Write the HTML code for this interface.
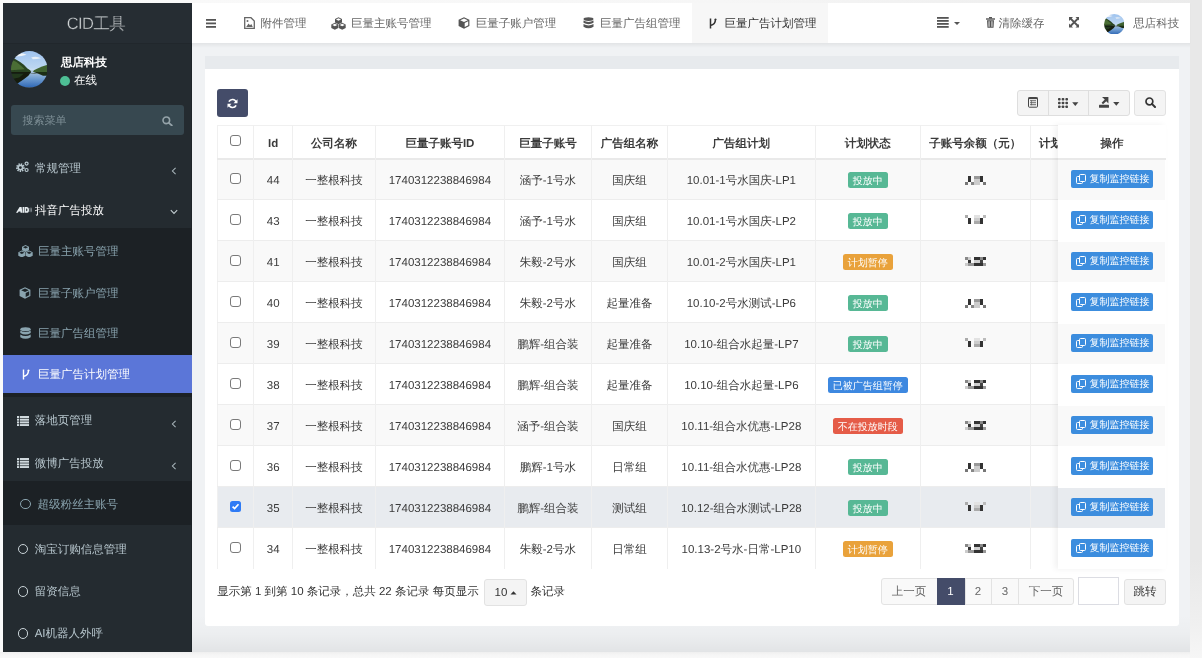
<!DOCTYPE html><html><head><meta charset="utf-8"><style>
*{box-sizing:border-box;margin:0;padding:0}
html,body{width:1202px;height:658px;overflow:hidden;background:linear-gradient(90deg,#fafafa,#f6f6f6 60%,#ebebeb);font-family:"Liberation Sans",sans-serif;font-size:11.5px;color:#333;text-rendering:geometricPrecision}
.a{position:absolute}
.t{position:absolute;white-space:nowrap;line-height:1}
#shadow{left:1190px;top:0;width:12px;height:658px;background:linear-gradient(180deg,#e8e8e8 85%,#f0f0f0 95%,#f6f6f6)}
#shadowb{left:0;top:652px;width:1190px;height:6px;background:linear-gradient(180deg,#efefef,#f6f6f6 50%,#f8f8f8)}
#side{left:3px;top:3px;width:189px;height:649px;background:#242b30;overflow:hidden;box-shadow:inset -1px 0 0 #1e2428}
#header{left:192px;top:3px;width:998px;height:40px;background:#fff;box-shadow:0 1px 1px rgba(0,0,0,.05)}
#content{left:192px;top:43px;width:998px;height:609px;background:#f0f2f4}
#card{left:204.5px;top:55.5px;width:974.5px;height:570.5px;background:#fff;border-radius:3px}
.side-t{color:#b8c7ce}
.sub-t{color:#8aa4af}
.hd-t{color:#555}
.cell{position:absolute;text-align:center;white-space:nowrap;line-height:1;color:#3b3b3b}
.bdg{position:absolute;color:#fff;font-size:10px;line-height:16px;height:16px;padding-top:2px;border-radius:2.5px;text-align:center;white-space:nowrap}
.cbx{position:absolute;width:11px;height:11px;border:1.1px solid #7a7a7a;border-radius:3px;background:#fff}
.vl{position:absolute;width:1px;background:#efefef}
.hl{position:absolute;height:1px;background:#ededed}
.btn{position:absolute;background:#f4f4f4;border:1px solid #e2e2e2;border-radius:3px}
</style></head><body><div id="root" style="position:absolute;left:0;top:0;width:1202px;height:658px;will-change:transform">
<div id="shadow" class="a"></div><div id="shadowb" class="a"></div>
<div id="side" class="a">
<div class="a" style="left:0;top:0;width:189px;height:40px;background:#262d33"></div>
<div class="t" style="left:-1.5px;width:189px;text-align:center;top:12.5px;font-size:16.5px;color:#d0d4d6;letter-spacing:-0.6px;-webkit-text-stroke:0.35px #262d33">CID工具</div>
<div class="a" style="left:0;top:40px;width:189px;height:1px;background:#21272c"></div>
<svg class="a" style="left:7.800000000000001px;top:48.2px" width="36.6" height="36.6" viewBox="0 0 40 40">
<defs><clipPath id="cs"><circle cx="20" cy="20" r="20"/></clipPath>
<filter id="fs" x="-10%" y="-10%" width="120%" height="120%"><feGaussianBlur stdDeviation="0.5"/></filter>
<linearGradient id="ss" x1="0" y1="0" x2="0" y2="1"><stop offset="0" stop-color="#9fc3ee"/><stop offset="0.45" stop-color="#bcd6f2"/><stop offset="0.6" stop-color="#dce9f5"/></linearGradient>
<linearGradient id="ws" x1="0" y1="0" x2="0" y2="1"><stop offset="0" stop-color="#b4cbe0"/><stop offset="0.5" stop-color="#6d9bd0"/><stop offset="1" stop-color="#2f67b5"/></linearGradient></defs>
<g clip-path="url(#cs)"><g filter="url(#fs)">
<rect width="40" height="40" fill="url(#ss)"/>
<path d="M4 4 Q10 1 17 4 Q12 6 6 6Z" fill="#eef3f8"/>
<path d="M22 7 Q28 5 33 8 Q28 9 24 9Z" fill="#e6eef6"/>
<rect y="21" width="40" height="19" fill="url(#ws)"/>
<path d="M0 6 L5 9 L10 12 L14 15 L18 19 L21 21 L22 23 L0 24Z" fill="#2b4420"/>
<path d="M0 9 L6 12 L11 16 L15 20 L0 21Z" fill="#4b6e34"/>
<path d="M40 15 L34 17 L29 19 L25 21 L24 23 L40 24Z" fill="#3f6230"/>
<path d="M0 23 L22 23 L19 27 L14 31 L8 35 L3 38 L0 40Z" fill="#141d10"/>
<path d="M0 25 L14 25 L9 29 L0 31Z" fill="#23381b"/>
<path d="M40 23 L25 23 L30 25 L35 27 L40 27Z" fill="#1f2d19"/>
<path d="M18 24 L30 24 L26 25 Z" fill="#4a5a50"/>
</g></g></svg>
<div class="t" style="left:58px;top:54.5px;color:#fff;font-weight:bold">思店科技</div>
<div class="a" style="left:57px;top:72.7px;width:10px;height:10px;border-radius:50%;background:#4ebf95"></div>
<div class="t" style="left:71px;top:73.3px;color:#fff">在线</div>
<div class="a" style="left:7.6px;top:102.3px;width:173.4px;height:30px;background:#374850;border-radius:3px"></div>
<div class="t" style="left:19.5px;top:113.3px;color:#7f9097;font-size:11px">搜索菜单</div>
<svg class="a" style="left:159px;top:113px" width="11" height="10" viewBox="0 0 11 10"><circle cx="4.3" cy="4.3" r="3.3" fill="none" stroke="#95a3a9" stroke-width="1.6"/><path d="M6.8 6.8 L9.8 9.5" stroke="#95a3a9" stroke-width="1.8" stroke-linecap="round"/></svg>
<svg class="a" style="left:13.3px;top:157.5px" width="14" height="12" viewBox="0 0 14 12"><g fill="none" stroke="#b8c7ce"><circle cx="4.4" cy="6.6" r="3.3" stroke-width="2.2" stroke-dasharray="1.3 0.92"/><circle cx="4.4" cy="6.6" r="2.2" stroke-width="1.6"/><circle cx="10.6" cy="2.6" r="1.5" stroke-width="1.2"/><circle cx="10.6" cy="9" r="1.5" stroke-width="1.2"/></g></svg>
<div class="t side-t" style="left:32px;top:160.7px">常规管理</div>
<svg class="a" style="left:168px;top:164px" width="6" height="8" viewBox="0 0 6 8"><path d="M4.6 0.8 L1.4 4 L4.6 7.2" fill="none" stroke="#a9b6bb" stroke-width="1.05"/></svg>
<svg class="a" style="left:12.6px;top:203.5px" width="16" height="6" viewBox="0 0 16 6"><g fill="#e6ecef"><path d="M0 5.8 L3.6 0 L5.6 0 L6.4 5.8 L4.6 5.8 L4.4 4.6 L2.6 4.6 L1.9 5.8Z"/><rect x="6.6" y="0" width="1.6" height="5.8"/><path d="M8.6 0 H10.6 Q13 0 13 2.9 Q13 5.8 10.6 5.8 H8.6Z"/></g><path d="M10.2 1.5 Q11.4 1.5 11.4 2.9 Q11.4 4.3 10.2 4.3Z" fill="#242b30"/><g fill="none" stroke="#aab5ba" stroke-width="0.7"><path d="M13.8 1.2 Q14.6 2.9 13.8 4.6"/><path d="M15 0.6 Q16 2.9 15 5.2"/></g></svg>
<div class="t side-t" style="left:32px;top:202.7px;color:#fff">抖音广告投放</div>
<svg class="a" style="left:167px;top:206.3px" width="8" height="6" viewBox="0 0 8 6"><path d="M0.8 1.2 L4 4.4 L7.2 1.2" fill="none" stroke="#c5d0d4" stroke-width="1.05"/></svg>
<div class="a" style="left:0;top:224.8px;width:189px;height:169.0px;background:#1c2125"></div>
<svg class="a" style="left:15px;top:242px" width="15" height="12" viewBox="0 0 15 12"><g fill="#8aa4af"><path d="M7.5 0 L11 1.8 L11 5.2 L7.5 7 L4 5.2 L4 1.8Z"/><path d="M3.8 5.5 L7.3 7.3 L7.3 10.7 L3.8 12.5 L0.3 10.7 L0.3 7.3Z"/><path d="M11.2 5.5 L14.7 7.3 L14.7 10.7 L11.2 12.5 L7.7 10.7 L7.7 7.3Z"/></g><g fill="#1b2226"><path d="M5 2.2 L7.5 3.4 L10 2.2 L7.5 1Z"/><path d="M1.3 7.7 L3.8 8.9 L6.3 7.7 L3.8 6.5Z"/><path d="M8.7 7.7 L11.2 8.9 L13.7 7.7 L11.2 6.5Z"/></g></svg>
<div class="t sub-t" style="left:35px;top:243.7px">巨量主账号管理</div>
<svg class="a" style="left:16px;top:284px" width="12" height="12" viewBox="0 0 12 12"><path d="M6 0.3 L11.4 2.8 L11.4 8.9 L6 11.7 L0.6 8.9 L0.6 2.8Z" fill="#8aa4af"/><path d="M2.2 3.2 L6 5 L9.8 3.2 L6 1.6Z" fill="#1b2226"/><path d="M6.7 6 L10.2 4.3 L10.2 8.3 L6.7 10Z" fill="#1b2226"/></svg>
<div class="t sub-t" style="left:35px;top:285.5px">巨量子账户管理</div>
<svg class="a" style="left:17px;top:323.5px" width="11" height="13" viewBox="0 0 11 13"><g fill="#8aa4af"><ellipse cx="5.5" cy="2.2" rx="5.2" ry="2"/><path d="M0.3 3.6 Q5.5 6.6 10.7 3.6 L10.7 6 Q5.5 9 0.3 6Z"/><path d="M0.3 7.4 Q5.5 10.4 10.7 7.4 L10.7 10.2 Q5.5 13.4 0.3 10.2Z"/></g></svg>
<div class="t sub-t" style="left:35px;top:325.7px">巨量广告组管理</div>
<div class="a" style="left:0;top:352.2px;width:189px;height:38.2px;background:#5b76d8"></div>
<svg class="a" style="left:19px;top:365.5px" width="8" height="11" viewBox="0 0 8 11"><path d="M1.5 0.5 L1.5 10.5 M1.5 7.5 Q6.5 6.5 6.5 1" fill="none" stroke="#fff" stroke-width="1.4"/><circle cx="6.5" cy="1.5" r="1" fill="#fff"/></svg>
<div class="t side-t" style="left:35px;top:367.0px;color:#fff">巨量广告计划管理</div>
<svg class="a" style="left:14px;top:412.5px" width="12" height="10" viewBox="0 0 12 10"><g fill="#d0d9dd"><rect x="0" y="0" width="2.2" height="2"/><rect x="3" y="0" width="9" height="2"/><rect x="0" y="2.7" width="2.2" height="2"/><rect x="3" y="2.7" width="9" height="2"/><rect x="0" y="5.4" width="2.2" height="2"/><rect x="3" y="5.4" width="9" height="2"/><rect x="0" y="8.1" width="2.2" height="1.9"/><rect x="3" y="8.1" width="9" height="1.9"/></g></svg>
<div class="t side-t" style="left:31.700000000000003px;top:413.2px">落地页管理</div>
<svg class="a" style="left:168px;top:416.5px" width="6" height="8" viewBox="0 0 6 8"><path d="M4.6 0.8 L1.4 4 L4.6 7.2" fill="none" stroke="#a9b6bb" stroke-width="1.05"/></svg>
<svg class="a" style="left:14px;top:454.8px" width="12" height="10" viewBox="0 0 12 10"><g fill="#d0d9dd"><rect x="0" y="0" width="2.2" height="2"/><rect x="3" y="0" width="9" height="2"/><rect x="0" y="2.7" width="2.2" height="2"/><rect x="3" y="2.7" width="9" height="2"/><rect x="0" y="5.4" width="2.2" height="2"/><rect x="3" y="5.4" width="9" height="2"/><rect x="0" y="8.1" width="2.2" height="1.9"/><rect x="3" y="8.1" width="9" height="1.9"/></g></svg>
<div class="t side-t" style="left:31.700000000000003px;top:455.5px">微博广告投放</div>
<svg class="a" style="left:168px;top:459px" width="6" height="8" viewBox="0 0 6 8"><path d="M4.6 0.8 L1.4 4 L4.6 7.2" fill="none" stroke="#a9b6bb" stroke-width="1.05"/></svg>
<div class="a" style="left:0;top:478px;width:189px;height:44px;background:#1c2125"></div>
<div class="a" style="left:17.4px;top:495.6px;width:10.5px;height:10.5px;border-radius:50%;border:1.6px solid #8aa4af"></div>
<div class="t sub-t" style="left:34.4px;top:496.5px">超级粉丝主账号</div>
<div class="a" style="left:14.7px;top:540.8px;width:10.5px;height:10.5px;border-radius:50%;border:1.6px solid #c9d3d7"></div>
<div class="t side-t" style="left:31.700000000000003px;top:541.7px">淘宝订购信息管理</div>
<div class="a" style="left:14.7px;top:583.0999999999999px;width:10.5px;height:10.5px;border-radius:50%;border:1.6px solid #c9d3d7"></div>
<div class="t side-t" style="left:31.700000000000003px;top:584.0px">留资信息</div>
<div class="a" style="left:14.7px;top:625.0px;width:10.5px;height:10.5px;border-radius:50%;border:1.6px solid #c9d3d7"></div>
<div class="t side-t" style="left:31.700000000000003px;top:625.9000000000001px">AI机器人外呼</div>
</div>
<div id="header" class="a"></div>
<div class="a" style="left:692.4px;top:3px;width:136px;height:40px;background:#f7f7f7"></div>
<svg class="a" style="left:206px;top:18.5px" width="10" height="9" viewBox="0 0 10 9"><g fill="#555"><rect y="0" width="10" height="1.8"/><rect y="3.5" width="10" height="1.8"/><rect y="7" width="10" height="1.8"/></g></svg>
<svg class="a" style="left:244px;top:17px" width="11" height="12" viewBox="0 0 11 12"><path d="M0.7 0.7 H7 L10.3 4 V11.3 H0.7Z" fill="none" stroke="#666" stroke-width="1.3"/><path d="M2.2 10 L4.5 6.5 L6 8.3 L7.3 7 L8.8 10Z" fill="#666"/><circle cx="3.5" cy="4" r="1" fill="#666"/></svg>
<div class="t" style="left:260.5px;top:18.7px;color:#666">附件管理</div>
<svg class="a" style="left:331.2px;top:16.5px" width="15" height="13" viewBox="0 0 15 12.5"><g fill="#555"><path d="M7.5 0 L11 1.8 L11 5.2 L7.5 7 L4 5.2 L4 1.8Z"/><path d="M3.8 5.5 L7.3 7.3 L7.3 10.7 L3.8 12.5 L0.3 10.7 L0.3 7.3Z"/><path d="M11.2 5.5 L14.7 7.3 L14.7 10.7 L11.2 12.5 L7.7 10.7 L7.7 7.3Z"/></g><g fill="#fff"><path d="M5 2.2 L7.5 3.4 L10 2.2 L7.5 1Z"/><path d="M1.3 7.7 L3.8 8.9 L6.3 7.7 L3.8 6.5Z"/><path d="M8.7 7.7 L11.2 8.9 L13.7 7.7 L11.2 6.5Z"/></g></svg>
<div class="t" style="left:351px;top:18.7px;color:#666">巨量主账号管理</div>
<svg class="a" style="left:457.5px;top:17px" width="12" height="12" viewBox="0 0 12 12"><path d="M6 0.3 L11.4 2.8 L11.4 8.9 L6 11.7 L0.6 8.9 L0.6 2.8Z" fill="#555"/><path d="M2.2 3.2 L6 5 L9.8 3.2 L6 1.6Z" fill="#fff"/><path d="M6.7 6 L10.2 4.3 L10.2 8.3 L6.7 10Z" fill="#fff"/></svg>
<div class="t" style="left:475.8px;top:18.7px;color:#666">巨量子账户管理</div>
<svg class="a" style="left:582.8px;top:16.8px" width="11" height="12.5" viewBox="0 0 11 13"><g fill="#555"><ellipse cx="5.5" cy="2.2" rx="5.2" ry="2"/><path d="M0.3 3.6 Q5.5 6.6 10.7 3.6 L10.7 6 Q5.5 9 0.3 6Z"/><path d="M0.3 7.4 Q5.5 10.4 10.7 7.4 L10.7 10.2 Q5.5 13.4 0.3 10.2Z"/></g></svg>
<div class="t" style="left:599.9px;top:18.7px;color:#666">巨量广告组管理</div>
<svg class="a" style="left:709.3px;top:17.5px" width="8" height="11" viewBox="0 0 8 11"><path d="M1.5 0.5 L1.5 10.5 M1.5 7.5 Q6.5 6.5 6.5 1" fill="none" stroke="#333" stroke-width="1.5"/><circle cx="6.5" cy="1.5" r="1" fill="#333"/></svg>
<div class="t" style="left:724.5px;top:18.7px;color:#333">巨量广告计划管理</div>
<svg class="a" style="left:937px;top:17px" width="24" height="11" viewBox="0 0 24 11"><g fill="#555"><rect y="0" width="11.7" height="1.8"/><rect y="3" width="11.7" height="1.8"/><rect y="6" width="11.7" height="1.8"/><rect y="9" width="11.7" height="1.8"/><path d="M17 5 L23 5 L20 8Z"/></g></svg>
<svg class="a" style="left:986px;top:17px" width="9" height="11" viewBox="0 0 9 11"><g fill="#555"><rect x="0" y="1.3" width="9" height="1.4"/><rect x="3" y="0" width="3" height="1.5"/><path d="M1 3.2 H8 L7.5 10.8 H1.5Z"/></g><g fill="#fff"><rect x="2.6" y="4.2" width="0.9" height="5.6"/><rect x="5.5" y="4.2" width="0.9" height="5.6"/></g></svg>
<div class="t" style="left:998.6px;top:18.7px;color:#666">清除缓存</div>
<svg class="a" style="left:1068.9px;top:17.4px" width="10.5" height="10.5" viewBox="0 0 10.5 10.5"><g fill="#555"><path d="M0 0 H4 L0 4Z"/><path d="M10.5 0 V4 L6.5 0Z"/><path d="M0 10.5 V6.5 L4 10.5Z"/><path d="M10.5 10.5 H6.5 L10.5 6.5Z"/></g><path d="M1.5 1.5 L9 9 M9 1.5 L1.5 9" stroke="#555" stroke-width="1.8"/></svg>
<svg class="a" style="left:1103.8px;top:13.7px" width="20.6" height="20.6" viewBox="0 0 40 40">
<defs><clipPath id="ch"><circle cx="20" cy="20" r="20"/></clipPath>
<filter id="fh" x="-10%" y="-10%" width="120%" height="120%"><feGaussianBlur stdDeviation="0.5"/></filter>
<linearGradient id="sh" x1="0" y1="0" x2="0" y2="1"><stop offset="0" stop-color="#9fc3ee"/><stop offset="0.45" stop-color="#bcd6f2"/><stop offset="0.6" stop-color="#dce9f5"/></linearGradient>
<linearGradient id="wh" x1="0" y1="0" x2="0" y2="1"><stop offset="0" stop-color="#b4cbe0"/><stop offset="0.5" stop-color="#6d9bd0"/><stop offset="1" stop-color="#2f67b5"/></linearGradient></defs>
<g clip-path="url(#ch)"><g filter="url(#fh)">
<rect width="40" height="40" fill="url(#sh)"/>
<path d="M4 4 Q10 1 17 4 Q12 6 6 6Z" fill="#eef3f8"/>
<path d="M22 7 Q28 5 33 8 Q28 9 24 9Z" fill="#e6eef6"/>
<rect y="21" width="40" height="19" fill="url(#wh)"/>
<path d="M0 6 L5 9 L10 12 L14 15 L18 19 L21 21 L22 23 L0 24Z" fill="#2b4420"/>
<path d="M0 9 L6 12 L11 16 L15 20 L0 21Z" fill="#4b6e34"/>
<path d="M40 15 L34 17 L29 19 L25 21 L24 23 L40 24Z" fill="#3f6230"/>
<path d="M0 23 L22 23 L19 27 L14 31 L8 35 L3 38 L0 40Z" fill="#141d10"/>
<path d="M0 25 L14 25 L9 29 L0 31Z" fill="#23381b"/>
<path d="M40 23 L25 23 L30 25 L35 27 L40 27Z" fill="#1f2d19"/>
<path d="M18 24 L30 24 L26 25 Z" fill="#4a5a50"/>
</g></g></svg>
<div class="t" style="left:1133.3px;top:18.7px;color:#666">思店科技</div>
<div id="content" class="a"></div>
<div class="a" style="left:192px;top:43px;width:998px;height:5px;background:linear-gradient(180deg,rgba(0,0,0,.06),rgba(0,0,0,0))"></div>
<div class="a" style="left:192px;top:615px;width:998px;height:37px;background:linear-gradient(180deg,rgba(0,0,0,0),rgba(0,0,0,.015) 50%,rgba(0,0,0,.06))"></div>
<div id="card" class="a"></div>
<div class="a" style="left:204.5px;top:55.5px;width:974.5px;height:13.5px;background:#e7eaed"></div>
<div class="a" style="left:217px;top:89.3px;width:31px;height:27.4px;background:#444c69;border-radius:3px"></div>
<svg class="a" style="left:227px;top:97.5px" width="11" height="11" viewBox="0 0 11 11"><g fill="none" stroke="#fff" stroke-width="1.7"><path d="M9.2 4.2 A4 4 0 0 0 1.9 3.6"/><path d="M1.8 6.8 A4 4 0 0 0 9.1 7.4"/></g><g fill="#fff"><path d="M10.5 1.2 L10.5 5.3 L6.5 5.3Z"/><path d="M0.5 9.8 L0.5 5.7 L4.5 5.7Z"/></g></svg>
<div class="btn" style="left:1016.6px;top:89.5px;width:113px;height:26.5px;border-color:#dedede"></div>
<div class="a" style="left:1047.9px;top:89.5px;width:1px;height:26.5px;background:#dedede"></div>
<div class="a" style="left:1088.4px;top:89.5px;width:1px;height:26.5px;background:#dedede"></div>
<div class="btn" style="left:1134.4px;top:89.5px;width:32px;height:26.5px"></div>
<svg class="a" style="left:1027.8px;top:97px" width="10" height="10.7" viewBox="0 0 10 10.7"><rect x="0.5" y="0.5" width="9" height="9.7" rx="0.8" fill="none" stroke="#444" stroke-width="1"/><rect x="0.5" y="0.5" width="9" height="1.6" fill="#444"/><g fill="#555"><rect x="2" y="3.3" width="6" height="0.9"/><rect x="2" y="5.3" width="6" height="0.9"/><rect x="2" y="7.3" width="6" height="0.9"/><rect x="3" y="3.3" width="0.6" height="5"/></g></svg>
<svg class="a" style="left:1058px;top:97.7px" width="21" height="10" viewBox="0 0 21 10"><g fill="#444"><rect x="0" y="0" width="2.6" height="2.6" rx="0.8"/><rect x="3.7" y="0" width="2.6" height="2.6" rx="0.8"/><rect x="7.4" y="0" width="2.6" height="2.6" rx="0.8"/><rect x="0" y="3.7" width="2.6" height="2.6" rx="0.8"/><rect x="3.7" y="3.7" width="2.6" height="2.6" rx="0.8"/><rect x="7.4" y="3.7" width="2.6" height="2.6" rx="0.8"/><rect x="0" y="7.4" width="2.6" height="2.6" rx="0.8"/><rect x="3.7" y="7.4" width="2.6" height="2.6" rx="0.8"/><rect x="7.4" y="7.4" width="2.6" height="2.6" rx="0.8"/><path d="M14.2 4.2 L20.4 4.2 L17.3 8Z"/></g></svg>
<svg class="a" style="left:1098.9px;top:97px" width="21" height="11" viewBox="0 0 21 11"><g fill="#444"><rect x="0" y="7.8" width="10" height="2.9" rx="0.5"/><path d="M9.4 0 L9.4 6.4 L7.3 4.3 L4 7.2 L2.6 5.8 L5.8 2.6 L3 0Z"/><path d="M14.2 4.9 L20.4 4.9 L17.3 8.7Z"/></g></svg>
<svg class="a" style="left:1145px;top:97.3px" width="11" height="11" viewBox="0 0 11 11"><circle cx="4.4" cy="4.4" r="3.4" fill="none" stroke="#333" stroke-width="1.7"/><path d="M6.9 6.9 L10 10" stroke="#333" stroke-width="2" stroke-linecap="round"/></svg>
<div class="a" style="left:217px;top:125.0px;width:949px;height:443.5px;border:1px solid #f0f0f0"></div>
<div class="a" style="left:218px;top:158.5px;width:840px;height:41.0px;background:#f9f9f9"></div>
<div class="a" style="left:218px;top:199.5px;width:840px;height:41.0px;background:#fff"></div>
<div class="a" style="left:218px;top:240.5px;width:840px;height:41.0px;background:#f9f9f9"></div>
<div class="a" style="left:218px;top:281.5px;width:840px;height:41.0px;background:#fff"></div>
<div class="a" style="left:218px;top:322.5px;width:840px;height:41.0px;background:#f9f9f9"></div>
<div class="a" style="left:218px;top:363.5px;width:840px;height:41.0px;background:#fff"></div>
<div class="a" style="left:218px;top:404.5px;width:840px;height:41.0px;background:#f9f9f9"></div>
<div class="a" style="left:218px;top:445.5px;width:840px;height:41.0px;background:#fff"></div>
<div class="a" style="left:218px;top:486.5px;width:840px;height:41.0px;background:#e8ebef"></div>
<div class="a" style="left:218px;top:527.5px;width:840px;height:41.0px;background:#fff"></div>
<div class="hl" style="left:217px;top:158.0px;width:841px;height:1.5px;background:#e9e9e9"></div>
<div class="hl" style="left:217px;top:199.0px;width:841px"></div>
<div class="hl" style="left:217px;top:240.0px;width:841px"></div>
<div class="hl" style="left:217px;top:281.0px;width:841px"></div>
<div class="hl" style="left:217px;top:322.0px;width:841px"></div>
<div class="hl" style="left:217px;top:363.0px;width:841px"></div>
<div class="hl" style="left:217px;top:404.0px;width:841px"></div>
<div class="hl" style="left:217px;top:445.0px;width:841px"></div>
<div class="hl" style="left:217px;top:486.0px;width:841px"></div>
<div class="hl" style="left:217px;top:527.0px;width:841px"></div>
<div class="vl" style="left:253.3px;top:125.0px;height:443.5px"></div>
<div class="vl" style="left:292.0px;top:125.0px;height:443.5px"></div>
<div class="vl" style="left:375.1px;top:125.0px;height:443.5px"></div>
<div class="vl" style="left:503.7px;top:125.0px;height:443.5px"></div>
<div class="vl" style="left:591.1px;top:125.0px;height:443.5px"></div>
<div class="vl" style="left:666.8px;top:125.0px;height:443.5px"></div>
<div class="vl" style="left:814.9px;top:125.0px;height:443.5px"></div>
<div class="vl" style="left:919.5px;top:125.0px;height:443.5px"></div>
<div class="vl" style="left:1030.0px;top:125.0px;height:443.5px"></div>
<div class="cbx" style="left:230px;top:135.2px"></div>
<div class="cell" style="left:253.8px;width:38.69999999999999px;top:138.89999999999998px;font-weight:bold">Id</div>
<div class="cell" style="left:292.5px;width:83.10000000000002px;top:138.89999999999998px;font-weight:bold">公司名称</div>
<div class="cell" style="left:375.6px;width:128.59999999999997px;top:138.89999999999998px;font-weight:bold">巨量子账号ID</div>
<div class="cell" style="left:504.2px;width:87.40000000000003px;top:138.89999999999998px;font-weight:bold">巨量子账号</div>
<div class="cell" style="left:591.6px;width:75.69999999999993px;top:138.89999999999998px;font-weight:bold">广告组名称</div>
<div class="cell" style="left:667.3px;width:148.10000000000002px;top:138.89999999999998px;font-weight:bold">广告组计划</div>
<div class="cell" style="left:815.4px;width:104.60000000000002px;top:138.89999999999998px;font-weight:bold">计划状态</div>
<div class="cell" style="left:920px;width:110.5px;top:138.89999999999998px;font-weight:bold">子账号余额（元）</div>
<div class="t" style="left:1039px;top:138.89999999999998px;font-weight:bold">计划</div>
<div class="cbx" style="left:230px;top:172.7px"></div>
<div class="cell" style="left:253.8px;width:38.69999999999999px;top:176.0px;">44</div>
<div class="cell" style="left:292.5px;width:83.10000000000002px;top:176.0px;">一整根科技</div>
<div class="cell" style="left:375.6px;width:128.59999999999997px;top:176.0px;">1740312238846984</div>
<div class="cell" style="left:504.2px;width:87.40000000000003px;top:176.0px;">涵予-1号水</div>
<div class="cell" style="left:591.6px;width:75.69999999999993px;top:176.0px;">国庆组</div>
<div class="cell" style="left:667.3px;width:148.10000000000002px;top:176.0px;">10.01-1号水国庆-LP1</div>
<div class="bdg" style="left:847.7px;top:172.2px;width:40px;background:#57b895">投放中</div>
<div class="cbx" style="left:230px;top:213.7px"></div>
<div class="cell" style="left:253.8px;width:38.69999999999999px;top:217.0px;">43</div>
<div class="cell" style="left:292.5px;width:83.10000000000002px;top:217.0px;">一整根科技</div>
<div class="cell" style="left:375.6px;width:128.59999999999997px;top:217.0px;">1740312238846984</div>
<div class="cell" style="left:504.2px;width:87.40000000000003px;top:217.0px;">涵予-1号水</div>
<div class="cell" style="left:591.6px;width:75.69999999999993px;top:217.0px;">国庆组</div>
<div class="cell" style="left:667.3px;width:148.10000000000002px;top:217.0px;">10.01-1号水国庆-LP2</div>
<div class="bdg" style="left:847.7px;top:213.2px;width:40px;background:#57b895">投放中</div>
<div class="cbx" style="left:230px;top:254.7px"></div>
<div class="cell" style="left:253.8px;width:38.69999999999999px;top:258.0px;">41</div>
<div class="cell" style="left:292.5px;width:83.10000000000002px;top:258.0px;">一整根科技</div>
<div class="cell" style="left:375.6px;width:128.59999999999997px;top:258.0px;">1740312238846984</div>
<div class="cell" style="left:504.2px;width:87.40000000000003px;top:258.0px;">朱毅-2号水</div>
<div class="cell" style="left:591.6px;width:75.69999999999993px;top:258.0px;">国庆组</div>
<div class="cell" style="left:667.3px;width:148.10000000000002px;top:258.0px;">10.01-2号水国庆-LP1</div>
<div class="bdg" style="left:842.7px;top:254.2px;width:50px;background:#e9a23b">计划暂停</div>
<div class="cbx" style="left:230px;top:295.7px"></div>
<div class="cell" style="left:253.8px;width:38.69999999999999px;top:299.0px;">40</div>
<div class="cell" style="left:292.5px;width:83.10000000000002px;top:299.0px;">一整根科技</div>
<div class="cell" style="left:375.6px;width:128.59999999999997px;top:299.0px;">1740312238846984</div>
<div class="cell" style="left:504.2px;width:87.40000000000003px;top:299.0px;">朱毅-2号水</div>
<div class="cell" style="left:591.6px;width:75.69999999999993px;top:299.0px;">起量准备</div>
<div class="cell" style="left:667.3px;width:148.10000000000002px;top:299.0px;">10.10-2号水测试-LP6</div>
<div class="bdg" style="left:847.7px;top:295.2px;width:40px;background:#57b895">投放中</div>
<div class="cbx" style="left:230px;top:336.7px"></div>
<div class="cell" style="left:253.8px;width:38.69999999999999px;top:340.0px;">39</div>
<div class="cell" style="left:292.5px;width:83.10000000000002px;top:340.0px;">一整根科技</div>
<div class="cell" style="left:375.6px;width:128.59999999999997px;top:340.0px;">1740312238846984</div>
<div class="cell" style="left:504.2px;width:87.40000000000003px;top:340.0px;">鹏辉-组合装</div>
<div class="cell" style="left:591.6px;width:75.69999999999993px;top:340.0px;">起量准备</div>
<div class="cell" style="left:667.3px;width:148.10000000000002px;top:340.0px;">10.10-组合水起量-LP7</div>
<div class="bdg" style="left:847.7px;top:336.2px;width:40px;background:#57b895">投放中</div>
<div class="cbx" style="left:230px;top:377.7px"></div>
<div class="cell" style="left:253.8px;width:38.69999999999999px;top:381.0px;">38</div>
<div class="cell" style="left:292.5px;width:83.10000000000002px;top:381.0px;">一整根科技</div>
<div class="cell" style="left:375.6px;width:128.59999999999997px;top:381.0px;">1740312238846984</div>
<div class="cell" style="left:504.2px;width:87.40000000000003px;top:381.0px;">鹏辉-组合装</div>
<div class="cell" style="left:591.6px;width:75.69999999999993px;top:381.0px;">起量准备</div>
<div class="cell" style="left:667.3px;width:148.10000000000002px;top:381.0px;">10.10-组合水起量-LP6</div>
<div class="bdg" style="left:827.7px;top:377.2px;width:80px;background:#3d88e0">已被广告组暂停</div>
<div class="cbx" style="left:230px;top:418.7px"></div>
<div class="cell" style="left:253.8px;width:38.69999999999999px;top:422.0px;">37</div>
<div class="cell" style="left:292.5px;width:83.10000000000002px;top:422.0px;">一整根科技</div>
<div class="cell" style="left:375.6px;width:128.59999999999997px;top:422.0px;">1740312238846984</div>
<div class="cell" style="left:504.2px;width:87.40000000000003px;top:422.0px;">涵予-组合装</div>
<div class="cell" style="left:591.6px;width:75.69999999999993px;top:422.0px;">国庆组</div>
<div class="cell" style="left:667.3px;width:148.10000000000002px;top:422.0px;">10.11-组合水优惠-LP28</div>
<div class="bdg" style="left:832.7px;top:418.2px;width:70px;background:#e55c48">不在投放时段</div>
<div class="cbx" style="left:230px;top:459.7px"></div>
<div class="cell" style="left:253.8px;width:38.69999999999999px;top:463.0px;">36</div>
<div class="cell" style="left:292.5px;width:83.10000000000002px;top:463.0px;">一整根科技</div>
<div class="cell" style="left:375.6px;width:128.59999999999997px;top:463.0px;">1740312238846984</div>
<div class="cell" style="left:504.2px;width:87.40000000000003px;top:463.0px;">鹏辉-1号水</div>
<div class="cell" style="left:591.6px;width:75.69999999999993px;top:463.0px;">日常组</div>
<div class="cell" style="left:667.3px;width:148.10000000000002px;top:463.0px;">10.11-组合水优惠-LP28</div>
<div class="bdg" style="left:847.7px;top:459.2px;width:40px;background:#57b895">投放中</div>
<div class="a" style="left:230px;top:500.7px;width:11px;height:11px;border-radius:2.5px;background:#2f7bf5"></div>
<svg class="a" style="left:230px;top:500.7px" width="11" height="11" viewBox="0 0 11 11"><path d="M2.6 5.6 L4.6 7.6 L8.5 3.3" fill="none" stroke="#fff" stroke-width="1.7"/></svg>
<div class="cell" style="left:253.8px;width:38.69999999999999px;top:504.0px;">35</div>
<div class="cell" style="left:292.5px;width:83.10000000000002px;top:504.0px;">一整根科技</div>
<div class="cell" style="left:375.6px;width:128.59999999999997px;top:504.0px;">1740312238846984</div>
<div class="cell" style="left:504.2px;width:87.40000000000003px;top:504.0px;">鹏辉-组合装</div>
<div class="cell" style="left:591.6px;width:75.69999999999993px;top:504.0px;">测试组</div>
<div class="cell" style="left:667.3px;width:148.10000000000002px;top:504.0px;">10.12-组合水测试-LP28</div>
<div class="bdg" style="left:847.7px;top:500.2px;width:40px;background:#57b895">投放中</div>
<div class="cbx" style="left:230px;top:541.7px"></div>
<div class="cell" style="left:253.8px;width:38.69999999999999px;top:545.0px;">34</div>
<div class="cell" style="left:292.5px;width:83.10000000000002px;top:545.0px;">一整根科技</div>
<div class="cell" style="left:375.6px;width:128.59999999999997px;top:545.0px;">1740312238846984</div>
<div class="cell" style="left:504.2px;width:87.40000000000003px;top:545.0px;">朱毅-2号水</div>
<div class="cell" style="left:591.6px;width:75.69999999999993px;top:545.0px;">日常组</div>
<div class="cell" style="left:667.3px;width:148.10000000000002px;top:545.0px;">10.13-2号水-日常-LP10</div>
<div class="bdg" style="left:842.7px;top:541.2px;width:50px;background:#e9a23b">计划暂停</div>
<div class="a" style="left:1058px;top:125.0px;width:108px;height:443.5px;background:#fff;box-shadow:-3px 0 6px rgba(0,0,0,.06)"></div>
<div class="cell" style="left:1058px;width:108px;top:138.89999999999998px;font-weight:bold">操作</div>
<div class="a" style="left:1058px;top:158.0px;width:108px;height:1.5px;background:#e9e9e9"></div>
<div class="a" style="left:1058px;top:159.5px;width:107px;height:40.0px;background:#f9f9f9"></div>
<div class="a" style="left:1070.9px;top:170.0px;width:82.5px;height:18.3px;background:#3c8dde;border-radius:2px"></div>
<svg class="a" style="left:1076px;top:174.10000000000002px" width="10" height="10" viewBox="0 0 10 10"><g fill="none" stroke="#fff" stroke-width="1"><path d="M3 2.5 H1.5 Q0.5 2.5 0.5 3.5 V8.5 Q0.5 9.5 1.5 9.5 H5.5 Q6.5 9.5 6.5 8.5 V7.5"/><rect x="3.5" y="0.5" width="6" height="7" rx="1"/></g></svg>
<div class="t" style="left:1089.4px;top:174.9px;font-size:10px;color:#fff">复制监控链接</div>
<div class="a" style="left:1058px;top:200.5px;width:107px;height:40.0px;background:#fff"></div>
<div class="a" style="left:1070.9px;top:211.0px;width:82.5px;height:18.3px;background:#3c8dde;border-radius:2px"></div>
<svg class="a" style="left:1076px;top:215.10000000000002px" width="10" height="10" viewBox="0 0 10 10"><g fill="none" stroke="#fff" stroke-width="1"><path d="M3 2.5 H1.5 Q0.5 2.5 0.5 3.5 V8.5 Q0.5 9.5 1.5 9.5 H5.5 Q6.5 9.5 6.5 8.5 V7.5"/><rect x="3.5" y="0.5" width="6" height="7" rx="1"/></g></svg>
<div class="t" style="left:1089.4px;top:215.9px;font-size:10px;color:#fff">复制监控链接</div>
<div class="a" style="left:1058px;top:241.5px;width:107px;height:40.0px;background:#f9f9f9"></div>
<div class="a" style="left:1070.9px;top:252.0px;width:82.5px;height:18.3px;background:#3c8dde;border-radius:2px"></div>
<svg class="a" style="left:1076px;top:256.1px" width="10" height="10" viewBox="0 0 10 10"><g fill="none" stroke="#fff" stroke-width="1"><path d="M3 2.5 H1.5 Q0.5 2.5 0.5 3.5 V8.5 Q0.5 9.5 1.5 9.5 H5.5 Q6.5 9.5 6.5 8.5 V7.5"/><rect x="3.5" y="0.5" width="6" height="7" rx="1"/></g></svg>
<div class="t" style="left:1089.4px;top:256.90000000000003px;font-size:10px;color:#fff">复制监控链接</div>
<div class="a" style="left:1058px;top:282.5px;width:107px;height:40.0px;background:#fff"></div>
<div class="a" style="left:1070.9px;top:293.0px;width:82.5px;height:18.3px;background:#3c8dde;border-radius:2px"></div>
<svg class="a" style="left:1076px;top:297.1px" width="10" height="10" viewBox="0 0 10 10"><g fill="none" stroke="#fff" stroke-width="1"><path d="M3 2.5 H1.5 Q0.5 2.5 0.5 3.5 V8.5 Q0.5 9.5 1.5 9.5 H5.5 Q6.5 9.5 6.5 8.5 V7.5"/><rect x="3.5" y="0.5" width="6" height="7" rx="1"/></g></svg>
<div class="t" style="left:1089.4px;top:297.90000000000003px;font-size:10px;color:#fff">复制监控链接</div>
<div class="a" style="left:1058px;top:323.5px;width:107px;height:40.0px;background:#f9f9f9"></div>
<div class="a" style="left:1070.9px;top:334.0px;width:82.5px;height:18.3px;background:#3c8dde;border-radius:2px"></div>
<svg class="a" style="left:1076px;top:338.1px" width="10" height="10" viewBox="0 0 10 10"><g fill="none" stroke="#fff" stroke-width="1"><path d="M3 2.5 H1.5 Q0.5 2.5 0.5 3.5 V8.5 Q0.5 9.5 1.5 9.5 H5.5 Q6.5 9.5 6.5 8.5 V7.5"/><rect x="3.5" y="0.5" width="6" height="7" rx="1"/></g></svg>
<div class="t" style="left:1089.4px;top:338.90000000000003px;font-size:10px;color:#fff">复制监控链接</div>
<div class="a" style="left:1058px;top:364.5px;width:107px;height:40.0px;background:#fff"></div>
<div class="a" style="left:1070.9px;top:375.0px;width:82.5px;height:18.3px;background:#3c8dde;border-radius:2px"></div>
<svg class="a" style="left:1076px;top:379.1px" width="10" height="10" viewBox="0 0 10 10"><g fill="none" stroke="#fff" stroke-width="1"><path d="M3 2.5 H1.5 Q0.5 2.5 0.5 3.5 V8.5 Q0.5 9.5 1.5 9.5 H5.5 Q6.5 9.5 6.5 8.5 V7.5"/><rect x="3.5" y="0.5" width="6" height="7" rx="1"/></g></svg>
<div class="t" style="left:1089.4px;top:379.90000000000003px;font-size:10px;color:#fff">复制监控链接</div>
<div class="a" style="left:1058px;top:405.5px;width:107px;height:40.0px;background:#f9f9f9"></div>
<div class="a" style="left:1070.9px;top:416.0px;width:82.5px;height:18.3px;background:#3c8dde;border-radius:2px"></div>
<svg class="a" style="left:1076px;top:420.1px" width="10" height="10" viewBox="0 0 10 10"><g fill="none" stroke="#fff" stroke-width="1"><path d="M3 2.5 H1.5 Q0.5 2.5 0.5 3.5 V8.5 Q0.5 9.5 1.5 9.5 H5.5 Q6.5 9.5 6.5 8.5 V7.5"/><rect x="3.5" y="0.5" width="6" height="7" rx="1"/></g></svg>
<div class="t" style="left:1089.4px;top:420.90000000000003px;font-size:10px;color:#fff">复制监控链接</div>
<div class="a" style="left:1058px;top:446.5px;width:107px;height:40.0px;background:#fff"></div>
<div class="a" style="left:1070.9px;top:457.0px;width:82.5px;height:18.3px;background:#3c8dde;border-radius:2px"></div>
<svg class="a" style="left:1076px;top:461.1px" width="10" height="10" viewBox="0 0 10 10"><g fill="none" stroke="#fff" stroke-width="1"><path d="M3 2.5 H1.5 Q0.5 2.5 0.5 3.5 V8.5 Q0.5 9.5 1.5 9.5 H5.5 Q6.5 9.5 6.5 8.5 V7.5"/><rect x="3.5" y="0.5" width="6" height="7" rx="1"/></g></svg>
<div class="t" style="left:1089.4px;top:461.90000000000003px;font-size:10px;color:#fff">复制监控链接</div>
<div class="a" style="left:1058px;top:487.5px;width:107px;height:40.0px;background:#e8ebef"></div>
<div class="a" style="left:1070.9px;top:498.0px;width:82.5px;height:18.3px;background:#3c8dde;border-radius:2px"></div>
<svg class="a" style="left:1076px;top:502.1px" width="10" height="10" viewBox="0 0 10 10"><g fill="none" stroke="#fff" stroke-width="1"><path d="M3 2.5 H1.5 Q0.5 2.5 0.5 3.5 V8.5 Q0.5 9.5 1.5 9.5 H5.5 Q6.5 9.5 6.5 8.5 V7.5"/><rect x="3.5" y="0.5" width="6" height="7" rx="1"/></g></svg>
<div class="t" style="left:1089.4px;top:502.90000000000003px;font-size:10px;color:#fff">复制监控链接</div>
<div class="a" style="left:1058px;top:528.5px;width:107px;height:40.0px;background:#fff"></div>
<div class="a" style="left:1070.9px;top:539.0px;width:82.5px;height:18.3px;background:#3c8dde;border-radius:2px"></div>
<svg class="a" style="left:1076px;top:543.0999999999999px" width="10" height="10" viewBox="0 0 10 10"><g fill="none" stroke="#fff" stroke-width="1"><path d="M3 2.5 H1.5 Q0.5 2.5 0.5 3.5 V8.5 Q0.5 9.5 1.5 9.5 H5.5 Q6.5 9.5 6.5 8.5 V7.5"/><rect x="3.5" y="0.5" width="6" height="7" rx="1"/></g></svg>
<div class="t" style="left:1089.4px;top:543.9px;font-size:10px;color:#fff">复制监控链接</div>
<svg class="a" style="left:965px;top:176.0px;filter:blur(0.35px)" width="21" height="9" viewBox="0 0 21 9"><rect x="3" y="0" width="3" height="6" fill="#333"/><rect x="9" y="0" width="6" height="3" fill="#999"/><rect x="9" y="3" width="6" height="6" fill="#ccc"/><rect x="15" y="0" width="3" height="6" fill="#333"/><rect x="0" y="6" width="3" height="3" fill="#777"/><rect x="6" y="6" width="3" height="3" fill="#888"/><rect x="18" y="6" width="3" height="3" fill="#777"/></svg>
<svg class="a" style="left:965px;top:215.0px;filter:blur(0.35px)" width="21" height="9" viewBox="0 0 21 9"><rect x="0" y="0" width="3" height="3" fill="#aaa"/><rect x="3" y="3" width="3" height="6" fill="#333"/><rect x="9" y="0" width="6" height="3" fill="#e2e2e2"/><rect x="9" y="3" width="6" height="3" fill="#ccc"/><rect x="9" y="6" width="6" height="3" fill="#aaa"/><rect x="15" y="3" width="3" height="6" fill="#333"/><rect x="18" y="0" width="3" height="3" fill="#bbb"/></svg>
<svg class="a" style="left:965px;top:257.0px;filter:blur(0.35px)" width="21" height="9" viewBox="0 0 21 9"><rect x="0" y="0" width="3" height="3" fill="#888"/><rect x="3" y="0" width="3" height="3" fill="#ccc"/><rect x="9" y="0" width="6" height="3" fill="#333"/><rect x="15" y="0" width="3" height="3" fill="#888"/><rect x="18" y="0" width="3" height="3" fill="#333"/><rect x="3" y="3" width="3" height="3" fill="#333"/><rect x="9" y="3" width="6" height="3" fill="#d0d0d0"/><rect x="15" y="3" width="3" height="3" fill="#444"/><rect x="0" y="6" width="3" height="3" fill="#ccc"/><rect x="3" y="6" width="6" height="3" fill="#999"/><rect x="9" y="6" width="9" height="3" fill="#333"/><rect x="18" y="6" width="3" height="3" fill="#999"/></svg>
<svg class="a" style="left:965px;top:299.0px;filter:blur(0.35px)" width="21" height="9" viewBox="0 0 21 9"><rect x="3" y="0" width="3" height="6" fill="#333"/><rect x="9" y="0" width="6" height="3" fill="#999"/><rect x="9" y="3" width="6" height="6" fill="#ccc"/><rect x="15" y="0" width="3" height="6" fill="#333"/><rect x="0" y="6" width="3" height="3" fill="#777"/><rect x="6" y="6" width="3" height="3" fill="#888"/><rect x="18" y="6" width="3" height="3" fill="#777"/></svg>
<svg class="a" style="left:965px;top:338.0px;filter:blur(0.35px)" width="21" height="9" viewBox="0 0 21 9"><rect x="0" y="0" width="3" height="3" fill="#aaa"/><rect x="3" y="3" width="3" height="6" fill="#333"/><rect x="9" y="0" width="6" height="3" fill="#e2e2e2"/><rect x="9" y="3" width="6" height="3" fill="#ccc"/><rect x="9" y="6" width="6" height="3" fill="#aaa"/><rect x="15" y="3" width="3" height="6" fill="#333"/><rect x="18" y="0" width="3" height="3" fill="#bbb"/></svg>
<svg class="a" style="left:965px;top:380.0px;filter:blur(0.35px)" width="21" height="9" viewBox="0 0 21 9"><rect x="0" y="0" width="3" height="3" fill="#888"/><rect x="3" y="0" width="3" height="3" fill="#ccc"/><rect x="9" y="0" width="6" height="3" fill="#333"/><rect x="15" y="0" width="3" height="3" fill="#888"/><rect x="18" y="0" width="3" height="3" fill="#333"/><rect x="3" y="3" width="3" height="3" fill="#333"/><rect x="9" y="3" width="6" height="3" fill="#d0d0d0"/><rect x="15" y="3" width="3" height="3" fill="#444"/><rect x="0" y="6" width="3" height="3" fill="#ccc"/><rect x="3" y="6" width="6" height="3" fill="#999"/><rect x="9" y="6" width="9" height="3" fill="#333"/><rect x="18" y="6" width="3" height="3" fill="#999"/></svg>
<svg class="a" style="left:965px;top:421.0px;filter:blur(0.35px)" width="21" height="9" viewBox="0 0 21 9"><rect x="0" y="0" width="3" height="3" fill="#888"/><rect x="3" y="0" width="3" height="3" fill="#ccc"/><rect x="9" y="0" width="6" height="3" fill="#333"/><rect x="15" y="0" width="3" height="3" fill="#888"/><rect x="18" y="0" width="3" height="3" fill="#333"/><rect x="3" y="3" width="3" height="3" fill="#333"/><rect x="9" y="3" width="6" height="3" fill="#d0d0d0"/><rect x="15" y="3" width="3" height="3" fill="#444"/><rect x="0" y="6" width="3" height="3" fill="#ccc"/><rect x="3" y="6" width="6" height="3" fill="#999"/><rect x="9" y="6" width="9" height="3" fill="#333"/><rect x="18" y="6" width="3" height="3" fill="#999"/></svg>
<svg class="a" style="left:965px;top:463.0px;filter:blur(0.35px)" width="21" height="9" viewBox="0 0 21 9"><rect x="3" y="0" width="3" height="6" fill="#333"/><rect x="9" y="0" width="6" height="3" fill="#999"/><rect x="9" y="3" width="6" height="6" fill="#ccc"/><rect x="15" y="0" width="3" height="6" fill="#333"/><rect x="0" y="6" width="3" height="3" fill="#777"/><rect x="6" y="6" width="3" height="3" fill="#888"/><rect x="18" y="6" width="3" height="3" fill="#777"/></svg>
<svg class="a" style="left:965px;top:502.0px;filter:blur(0.35px)" width="21" height="9" viewBox="0 0 21 9"><rect x="0" y="0" width="3" height="3" fill="#aaa"/><rect x="3" y="3" width="3" height="6" fill="#333"/><rect x="9" y="0" width="6" height="3" fill="#e2e2e2"/><rect x="9" y="3" width="6" height="3" fill="#ccc"/><rect x="9" y="6" width="6" height="3" fill="#aaa"/><rect x="15" y="3" width="3" height="6" fill="#333"/><rect x="18" y="0" width="3" height="3" fill="#bbb"/></svg>
<svg class="a" style="left:965px;top:544.0px;filter:blur(0.35px)" width="21" height="9" viewBox="0 0 21 9"><rect x="0" y="0" width="3" height="3" fill="#888"/><rect x="3" y="0" width="3" height="3" fill="#ccc"/><rect x="9" y="0" width="6" height="3" fill="#333"/><rect x="15" y="0" width="3" height="3" fill="#888"/><rect x="18" y="0" width="3" height="3" fill="#333"/><rect x="3" y="3" width="3" height="3" fill="#333"/><rect x="9" y="3" width="6" height="3" fill="#d0d0d0"/><rect x="15" y="3" width="3" height="3" fill="#444"/><rect x="0" y="6" width="3" height="3" fill="#ccc"/><rect x="3" y="6" width="6" height="3" fill="#999"/><rect x="9" y="6" width="9" height="3" fill="#333"/><rect x="18" y="6" width="3" height="3" fill="#999"/></svg>
<div class="t" style="left:217.3px;top:587.3px">显示第 1 到第 10 条记录，总共 22 条记录 每页显示</div>
<div class="btn" style="left:483.9px;top:579.3px;width:43px;height:26.3px"></div>
<div class="t" style="left:494.5px;top:588.3px">10</div>
<svg class="a" style="left:509.5px;top:590.5px" width="7" height="4" viewBox="0 0 7 4"><path d="M0.5 3.5 L6.5 3.5 L3.5 0.3Z" fill="#333"/></svg>
<div class="t" style="left:530.4px;top:587.3px">条记录</div>
<div class="a" style="left:881.2px;top:577.5px;width:192.5px;height:27.4px;border:1px solid #e3e3e3;border-radius:3px;background:#f9f9f9"></div>
<div class="a" style="left:936.6px;top:577.5px;width:1px;height:27.4px;background:#e3e3e3"></div>
<div class="a" style="left:964.5px;top:577.5px;width:1px;height:27.4px;background:#e3e3e3"></div>
<div class="a" style="left:991.4px;top:577.5px;width:1px;height:27.4px;background:#e3e3e3"></div>
<div class="a" style="left:1018.3px;top:577.5px;width:1px;height:27.4px;background:#e3e3e3"></div>
<div class="a" style="left:936.6px;top:577.5px;width:28px;height:27.4px;background:#444c69"></div>
<div class="cell" style="left:881.2px;width:55.39999999999998px;top:587px;color:#666">上一页</div>
<div class="cell" style="left:936.6px;width:27.899999999999977px;top:587px;color:#fff">1</div>
<div class="cell" style="left:964.5px;width:26.899999999999977px;top:587px;color:#666">2</div>
<div class="cell" style="left:991.4px;width:26.899999999999977px;top:587px;color:#666">3</div>
<div class="cell" style="left:1018.3px;width:55.40000000000009px;top:587px;color:#666">下一页</div>
<div class="a" style="left:1078.2px;top:577px;width:41.3px;height:27.6px;border:1px solid #dcdde3;background:#fff"></div>
<div class="btn" style="left:1123.7px;top:578.5px;width:42.6px;height:26.5px"></div>
<div class="cell" style="left:1123.7px;width:42.59999999999991px;top:587px;color:#333">跳转</div>
</div></body></html>
